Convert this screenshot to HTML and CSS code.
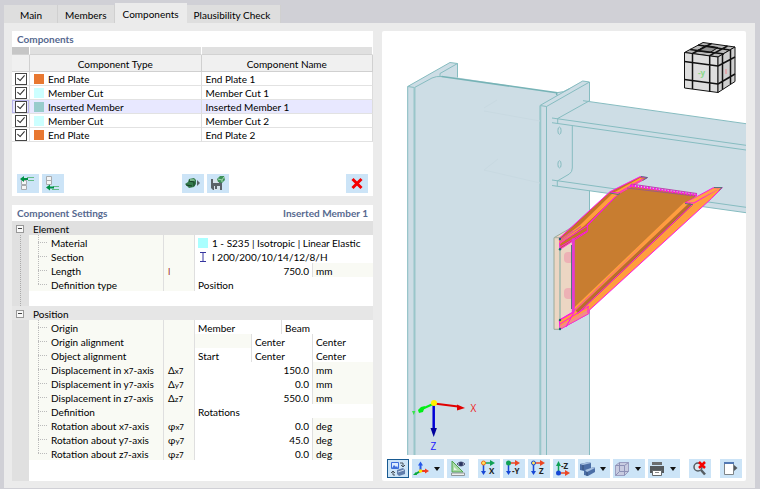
FILE: index.html
```html
<!DOCTYPE html>
<html lang="en">
<head>
<meta charset="utf-8">
<title>Steel Joint - Components</title>
<link rel="stylesheet" href="styles.css">
</head>
<body>
<div class="dialog">
  <nav class="tabs" role="tablist">
    <button class="tab" role="tab">Main</button>
    <button class="tab" role="tab">Members</button>
    <button class="tab active" role="tab" aria-selected="true">Components</button>
    <button class="tab" role="tab">Plausibility Check</button>
  </nav>
  <main class="content">
    <div class="left">
      <section class="panel list-panel">
        <header class="panel-title"><h2>Components</h2></header>
        <table class="components">
          <colgroup><col class="c-check"><col><col></colgroup>
          <thead>
            <tr class="strip"><td class="corner"></td><td></td><td></td></tr>
            <tr class="head"><th></th><th>Component Type</th><th>Component Name</th></tr>
          </thead>
          <tbody>
            <tr><td><input type="checkbox" checked aria-label="End Plate 1"></td><td><div class="type"><i class="swatch orange"></i>End Plate</div></td><td>End Plate 1</td></tr>
            <tr><td><input type="checkbox" checked aria-label="Member Cut 1"></td><td><div class="type"><i class="swatch cyan"></i>Member Cut</div></td><td>Member Cut 1</td></tr>
            <tr class="selected"><td><input type="checkbox" checked aria-label="Inserted Member 1"></td><td><div class="type"><i class="swatch teal"></i>Inserted Member</div></td><td>Inserted Member 1</td></tr>
            <tr><td><input type="checkbox" checked aria-label="Member Cut 2"></td><td><div class="type"><i class="swatch cyan"></i>Member Cut</div></td><td>Member Cut 2</td></tr>
            <tr><td><input type="checkbox" checked aria-label="End Plate 2"></td><td><div class="type"><i class="swatch orange"></i>End Plate</div></td><td>End Plate 2</td></tr>
          </tbody>
        </table>
        <div class="list-actions">
          <div class="group">
            <button class="tool" aria-label="Insert above"><svg width="22" height="19" viewBox="0 0 22 19"><path d="M4.500 6.500h5v4h-5zM4.500 11.500h5v4h-5z" fill="#f6f6f6" stroke="#a8abae"/><path d="M10 3.500h7M11 6.500h6" stroke="#64bd88"/><path d="M3 5l4-3v2h4v2H7v2z" fill="#009246"/></svg></button>
            <button class="tool" aria-label="Insert below"><svg width="22" height="19" viewBox="0 0 22 19"><path d="M4.500 2.500h5v4h-5zM4.500 6.500h5v4h-5z" fill="#f6f6f6" stroke="#a8abae"/><path d="M11 12.500h6M10 15.500h7" stroke="#64bd88"/><path d="M4 13.500l4-3v2h4v2H8v2z" fill="#009246"/></svg></button>
          </div>
          <div class="group">
            <button class="tool" aria-label="Import component"><svg width="22" height="19" viewBox="0 0 22 19"><path d="M3 10l3-2 1-3 5-1 2 2v4l-2 3-5 1z" fill="#347a4c"/><path d="M4 11l6 1M7 7l5 1v4" stroke="#173e25" fill="none"/><path d="M8 5l4 0 1 2-5 0z" fill="#79b58a"/><path d="M15 6l3 3-3 3z" fill="#59646b"/></svg></button>
            <button class="tool" aria-label="Save component"><svg width="22" height="19" viewBox="0 0 22 19"><path d="M4 5h10l1 1v10H6l-2-2z" fill="#596168"/><path d="M6 5h6v4H6zM7 12h6v4H7z" fill="#d5e2ec"/><path d="M8 12h2v3H8z" fill="#596168"/><path d="M10 5l3-3 4 0 1 4-3 3-4-1z" fill="#3d9259"/><path d="M11 5l4 1 2-3M15 6v2" stroke="#a8d7b5" fill="none"/></svg></button>
          </div>
          <button class="tool" aria-label="Delete component"><svg width="22" height="19" viewBox="0 0 22 19"><path d="M6.500 5l9 9M15.500 5l-9 9" stroke="#f50000" stroke-width="3"/></svg></button>
        </div>
      </section>
      <section class="panel settings-panel">
        <header class="panel-title"><h2>Component Settings</h2><strong>Inserted Member 1</strong></header>
        <table class="props">
          <colgroup><col class="p-gutter"><col class="p-name"><col class="p-symbol"><col class="p-a"><col class="p-b"><col class="p-c"><col></colgroup>
          <tbody>
            <tr class="category"><td><button class="fold" aria-label="Collapse Element"></button></td><th colspan="6">Element</th></tr>
            <tr><td></td><td>Material</td><td></td><td colspan="4"><div class="value"><i class="swatch aqua"></i>1 - S235 | Isotropic | Linear Elastic</div></td></tr>
            <tr><td></td><td>Section</td><td></td><td colspan="4"><div class="value"><svg class="section-icon" width="10" height="10" viewBox="0 0 10 10"><path d="M2 .5h6M5 .5v9M2 9.500h6" stroke="#3636a0" fill="none"/></svg>I 200/200/10/14/12/8/H</div></td></tr>
            <tr><td></td><td>Length</td><td class="red">l</td><td class="num" colspan="3">750.0</td><td class="unit">mm</td></tr>
            <tr class="last"><td></td><td>Definition type</td><td></td><td colspan="4">Position</td></tr>
            <tr class="spacer"><td></td><td colspan="6"></td></tr>
          </tbody>
          <tbody class="position">
            <tr class="category light"><td><button class="fold" aria-label="Collapse Position"></button></td><th colspan="6">Position</th></tr>
            <tr><td></td><td>Origin</td><td></td><td class="split" colspan="2">Member</td><td colspan="2">Beam</td></tr>
            <tr><td></td><td>Origin alignment</td><td></td><td class="split off"></td><td class="split" colspan="2">Center</td><td>Center</td></tr>
            <tr><td></td><td>Object alignment</td><td></td><td class="split">Start</td><td class="split" colspan="2">Center</td><td>Center</td></tr>
            <tr><td></td><td>Displacement in x<small>7</small>-axis</td><td>Δ<small>x7</small></td><td class="num" colspan="3">150.0</td><td class="unit">mm</td></tr>
            <tr><td></td><td>Displacement in y<small>7</small>-axis</td><td>Δ<small>y7</small></td><td class="num" colspan="3">0.0</td><td class="unit">mm</td></tr>
            <tr><td></td><td>Displacement in z<small>7</small>-axis</td><td>Δ<small>z7</small></td><td class="num" colspan="3">550.0</td><td class="unit">mm</td></tr>
            <tr><td></td><td>Definition</td><td></td><td colspan="4">Rotations</td></tr>
            <tr><td></td><td>Rotation about x<small>7</small>-axis</td><td>φ<small>x7</small></td><td class="num" colspan="3">0.0</td><td class="unit">deg</td></tr>
            <tr><td></td><td>Rotation about y<small>7</small>-axis</td><td>φ<small>y7</small></td><td class="num" colspan="3">45.0</td><td class="unit">deg</td></tr>
            <tr class="last"><td></td><td>Rotation about z<small>7</small>-axis</td><td>φ<small>z7</small></td><td class="num" colspan="3">0.0</td><td class="unit">deg</td></tr>
          </tbody>
        </table>
        <div class="gutter-rest"></div>
      </section>
    </div>
    <section class="panel view-panel">
      <svg class="scene" viewBox="382 31 364 424" role="img" aria-label="Joint model">
        <!-- column -->
        <g fill="#cddde5">
          <path d="M407.500 86.500L450 62.500l7.500 1v14L556.700 92.700 563 91.500 582.700 81l6.800 1V455H407.500z"/>
          <path d="M583 100.700L746 123.700V212.700L552 185.500v-67z"/>
        </g>
        <g fill="none" stroke="#86bcc0">
          <path d="M407.700 455V86.500L450 62.500l7.500 1L440 73.500v3M457.500 63.500v14M407.700 86.500l6.800 1L432 78q4-2 10-1.500"/>
          <path d="M414.500 455V87" stroke="#99c6ca" stroke-width="2"/>
          <path d="M441.700 76.500l115 16.200v2.500" stroke="#76b3b6" stroke-width="1.500"/>
          <path d="M556.700 92.700q7 0 13-4M540 105.500L582.700 81l6.800 1v19M540 105.500l6.500 1L589 82.300M589.500 190.500V455"/>
          <path d="M540.300 455V105.500" stroke="#99c6ca" stroke-width="2"/>
          <path d="M546.500 455V106.500"/>
        </g>
        <!-- beam -->
        <g fill="none" stroke="#86bcc0">
          <path d="M583 100.700L746 123.700M552 118l194 27.300M552 122.700l194 27.300M557.700 118.500v5M557.700 118.500L589 101M572.300 126v42q0 4-3 6l-12 7v5M552 180l194 27.300M552 185.500l194 27.200"/>
          <ellipse cx="559.500" cy="130.700" rx="1.600" ry="3.600"/><ellipse cx="559.500" cy="164.300" rx="1.600" ry="3.600"/>
        </g>
        <g fill="none" stroke="#c8d9e1"><path d="M484 111l56 10M484 108l13-8M484 170l56 13M484 170l14-11"/></g>
        <!-- end plate -->
        <path d="M554 237.700l19-11 16 0v86.600L560 329.300h-6z" fill="#ecd6c3" stroke="#9aaa99"/>
        <path d="M560 329V238" stroke="#78aaa0"/><path d="M554 237.700h6l14-9" stroke="#a2b2a1" fill="none"/>
        <g fill="#edb1b5"><rect x="564" y="252" width="10" height="11" rx="4"/><rect x="564" y="288" width="10" height="11" rx="4"/></g>
        <!-- inserted member -->
        <path d="M573.300 238L587 225l31-33 12-6 67 9-8 9L573.300 311.700z" fill="#c87d30"/>
        <path d="M559.300 238.300L610 191.700l30-15 7.300 1-29 16.300-31 31v6.700L560 249.300z" fill="#c57428" stroke="#ff14e8"/>
        <path d="M560 244l24-18 34-32 27-15-5-1-27 15-33 32-21 16z" fill="#ff9e3e"/>
        <path d="M560 243l27-17 28-29M560 247l27-16M610 192l8 1 25-14" fill="none" stroke="#ff14e8"/>
        <path d="M560 239.500l13-9M560 241.500l21-15" stroke="#d743ac"/>
        <path d="M627 188l68 8" stroke="#a05a81"/>
        <path d="M630 185.500l67 9.500" stroke="#ff14e8" stroke-width="2.500" stroke-dasharray="2 1"/>
        <path d="M631 184l66 9.500" stroke="#bb45ad"/>
        <path d="M559.300 320l14-8.300L685 203l28.300-15.300h9l-10.600 10.600L589 310.500v3L560 329.300z" fill="#ff9e3e" stroke="#ff14e8"/>
        <path d="M560 326l29-17v4l-29 16z" fill="#f48a8a"/>
        <path d="M577 312L691 204" stroke="#b96d2d" stroke-width="4"/>
        <path d="M573 310L685 203" stroke="#ff9e3e" stroke-width="2"/>
        <path d="M560 324l29-18M560 320l14-8-8 15M577 314L692 205M685 203h9l24-14M588 306v7" stroke="#ff14e8" fill="none"/>
        <path d="M687 202l26-13 6 0-26 13z" fill="#ffa04a"/>
        <path d="M573.300 238.500V312" stroke="#e43cd0" stroke-width="3"/>
        <path d="M571.500 245V309M641 176.500l6.500 1-5 3M610 193l8 1.500 2-1M714 187.500h8l-3 3M685 203.500l8 1.200" fill="none" stroke="#55777b"/>
        <g fill="#176d6e"><circle cx="560" cy="239" r="1.200"/><circle cx="560" cy="249.300" r="1.200"/><circle cx="560" cy="320" r="1.200"/><circle cx="560" cy="329" r="1.200"/></g>
        <!-- axes -->
        <g stroke-width="2" fill="none"><path d="M434 403.500l-13 6" stroke="#00ef16"/><path d="M434 403.500l24 3" stroke="#e10000"/><path d="M433.700 404v25" stroke="#0000d6" stroke-width="2.500"/></g>
        <path d="M418 410l3-3 4-1-2 6-4 1z" fill="#00ef16"/><path d="M465 408l-8-3.500v6z" fill="#e10000"/><path d="M433.700 437l-3.200-9h6.400z" fill="#00009c"/>
        <circle cx="434" cy="403" r="3" fill="#fff100"/>
        <path d="M412 411l1.700 4 1.700-4z" fill="#37e54a"/>
        <text x="470.500" y="412" class="axis" fill="#ee2222">X</text>
        <text x="430.500" y="450" class="axis" fill="#2020ff">Z</text>
        <!-- view cube -->
        <g stroke="#111" stroke-linejoin="round">
          <path d="M684.500 52.500L703 42.500l32 4.500-17 10z" fill="#b9b9b9"/>
          <path d="M684.500 52.500L718 57v35.500L684.500 88z" fill="#dedede"/>
          <path d="M718 57l17-10v34.500L718 92.500z" fill="#cfcfcf"/>
          <path d="M697 51l9-5.500 12 2-8 5z" fill="#929292"/>
          <path d="M692.500 53.500V89M709.700 55.700v36M684.500 61.500L718 66M684.500 79.500L718 84M722.500 54.500v35M730.500 50v34M718 66l17-9M718 84l17-10M692.500 53.500l19-10M709.700 55.700L727.500 46M690 49.500l34 4.500M698 45l31.500 5" fill="none" stroke-width="1.500"/>
        </g>
        <text x="698" y="76" class="cube-label">-y</text><path d="M726 69v5" stroke="#e0aaae" stroke-width="2"/>
      </svg>
      <div class="toolbar">
        <div class="group">
          <button class="tool pressed" aria-label="Render mode"><svg width="20" height="18" viewBox="0 0 20 18"><path d="M3.500 2.500h7v6h-7z" fill="#dcecff" stroke="#3d6edb"/><path d="M4 8l2-3 2 2 1-1 1 2z" fill="#3d6edb"/><path d="M12 3h3v4M13 5l2 2 2-2M7 15H5v-4M3 13l2-2 2 2" fill="none" stroke="#48535c"/><path d="M9 10l6-2 2 2v4l-6 2-2-2z" fill="#617eac"/><path d="M10 12l6-2" stroke="#cad9ed"/></svg></button>
          <button class="tool wide" aria-label="Coordinate axes"><svg width="22" height="18" viewBox="0 0 22 18"><path d="M8.500 11V5" stroke="#2458e8" stroke-width="2"/><path d="M8.500 11l-5 3" stroke="#0aa83e" stroke-width="2"/><path d="M8.500 11h6" stroke="#f03b22" stroke-width="2"/><path d="M6 5.500l2.500-4 2.500 4z" fill="#2458e8"/><path d="M1 15l3-3 1 3z" fill="#0aa83e"/><path d="M13 8.500l4 2.500-4 2.500z" fill="#f03b22"/><circle cx="8.500" cy="11" r="1.800" fill="#ffe600"/></svg><i class="caret"></i></button>
          <button class="tool" aria-label="Measure"><svg width="22" height="19" viewBox="0 0 22 19"><path d="M5 2v11h11z" fill="#acdba9" stroke="#4fa64d"/><path d="M7 8v3h3z" fill="#e9f5e9"/><path d="M4.500 14h13v2.500h-13z" fill="#eee" stroke="#8f9699"/><path d="M10 5q4-4 8 0-4 4-8 0z" fill="#c6ccda" stroke="#4e577a"/><circle cx="14" cy="5" r="2" fill="#293560"/></svg></button>
        </div>
        <div class="group">
          <button class="tool" aria-label="View in X"><svg width="22" height="19" viewBox="0 0 22 19"><path d="M6 4h7" stroke="#10a155" stroke-width="1.500"/><path d="M12 1l5 3-5 3z" fill="#10a155"/><path d="M5.500 4v9" stroke="#1647d5" stroke-width="1.500"/><path d="M3 12h5l-2.500 4z" fill="#1647d5"/><circle cx="5.500" cy="4" r="2" fill="#ffe25b" stroke="#f06b16"/><text x="11" y="15" class="glyph">X</text></svg></button>
          <button class="tool" aria-label="View in minus Y"><svg width="22" height="19" viewBox="0 0 22 19"><path d="M6 4h7" stroke="#ec4624" stroke-width="1.500"/><path d="M12 1l5 3-5 3z" fill="#ec4624"/><path d="M5.500 4v9" stroke="#1647d5" stroke-width="1.500"/><path d="M3 12h5l-2.500 4z" fill="#1647d5"/><circle cx="5.500" cy="4" r="2.500" fill="#10a155"/><text x="9" y="15" class="glyph">-Y</text></svg></button>
          <button class="tool" aria-label="View in Z"><svg width="22" height="19" viewBox="0 0 22 19"><path d="M6 4h7" stroke="#ec4624" stroke-width="1.500"/><path d="M12 1l5 3-5 3z" fill="#ec4624"/><path d="M5.500 4v9" stroke="#1647d5" stroke-width="1.500"/><path d="M3 12h5l-2.500 4z" fill="#1647d5"/><circle cx="5.500" cy="4" r="2" fill="#ffe25b" stroke="#1647d5"/><text x="11" y="15" class="glyph">Z</text></svg></button>
          <button class="tool" aria-label="View in minus Z"><svg width="22" height="19" viewBox="0 0 22 19"><path d="M6 14h7" stroke="#ec4624" stroke-width="1.500"/><path d="M12 11l5 3-5 3z" fill="#ec4624"/><path d="M5.500 14V6" stroke="#10a155" stroke-width="1.500"/><path d="M3 7h5L5.500 2z" fill="#10a155"/><circle cx="5.500" cy="14" r="2.500" fill="#1647d5"/><text x="8" y="10" class="glyph">-Z</text></svg></button>
          <button class="tool wide" aria-label="Display solid"><svg width="22" height="18" viewBox="0 0 22 18"><path d="M2 4l9-2 2 1v5l3-1 1 1v4l-7 4-4-1v-4l-4-1z" fill="#4b6ea6"/><path d="M2 4l9-2 2 1-8 2zM7 10l9-3 1 1-8 4z" fill="#a8c2e2"/><path d="M5 5v5M9 12v4" stroke="#344f7b" fill="none"/></svg><i class="caret"></i></button>
          <button class="tool wide" aria-label="Display wireframe"><svg width="22" height="18" viewBox="0 0 22 18"><path d="M2.500 5.500l4-3h9v9l-4 4h-9z" fill="#c8cbe0" stroke="#9a9dc0"/><path d="M2.500 5.500h9v10M11.500 5.500l4-3M6.500 2.500v9h9M6.500 11.500l-4 4" fill="none" stroke="#8d91b6"/></svg><i class="caret"></i></button>
          <button class="tool wide" aria-label="Print"><svg width="22" height="18" viewBox="0 0 22 18"><path d="M4 2h10v3H4z" fill="#6b6e70"/><path d="M2 6h14v7H2z" fill="#54595d"/><path d="M4.500 10.500h9v5h-9z" fill="#fff" stroke="#63686b"/><path d="M7 12.500h4" stroke="#888"/></svg><i class="caret"></i></button>
        </div>
        <button class="tool" aria-label="Reset zoom"><svg width="22" height="19" viewBox="0 0 22 19"><circle cx="9" cy="8" r="4" fill="#dce8ef" stroke="#555d63" stroke-width="1.500"/><path d="M12 11l4 4.500" stroke="#555d63" stroke-width="2.500"/><path d="M10 3l6 6M16 3l-6 6" stroke="#f50000" stroke-width="2.500"/></svg></button>
        <button class="tool" aria-label="Detach view"><svg width="22" height="19" viewBox="0 0 22 19"><path d="M4.500 3.500h9v12h-9z" fill="#fff" stroke="#7e8488"/><path d="M4 3h10v2H4z" fill="#5379b4"/><path d="M14 6l3.500 3-3.500 3z" fill="#52585c"/></svg></button>
      </div>
    </section>
  </main>
</div>
</body>
</html>
```
FILE: styles.css
```css
* { box-sizing: border-box; }

body {
  margin: 0;
  background: #d0d0d6;
  color: #000;
  font: 10px/14px Lato, "Open Sans", sans-serif;
}

button { font: inherit; color: inherit; }

.dialog {
  display: flex;
  flex-direction: column;
  min-height: 100vh;
  padding: 3px 5px 1px 4px;
}

.tabs {
  display: flex;
  align-items: flex-end;
  height: 20px;
}

.tab {
  height: 18px;
  padding: 2px 7px 0;
  border: 0;
  border-right: 1px solid #d0d0d0;
  background: #dedede;
  line-height: 16px;
}

.tab:first-child { padding: 2px 15px 0 16px; }
.tab:last-child { padding-right: 10px; }

.tab.active {
  height: 20px;
  padding: 2px 8px 0;
  border: 0;
  background: #ebebeb;
  line-height: 18px;
}

.content {
  flex: 1;
  display: grid;
  grid-template-columns: minmax(0, 361fr) minmax(0, 364fr);
  gap: 9px;
  padding: 8px 9px 7px 8px;
  background: #ebebeb;
}

.left {
  display: flex;
  flex-direction: column;
  gap: 9px;
  min-width: 0;
}

.panel {
  display: flex;
  flex-direction: column;
  background: #fff;
}

.settings-panel { flex: 1; }

.panel-title {
  display: flex;
  justify-content: space-between;
  padding: 0 5px;
  color: #56698f;
  font-weight: 700;
  line-height: 16px;
}

.panel-title h2 { margin: 0; font: inherit; }
.panel-title strong { font: inherit; }

table {
  width: 100%;
  border-collapse: separate;
  border-spacing: 0;
  table-layout: fixed;
}

td, th {
  height: 14px;
  padding: 2px 0 0;
  line-height: 12px;
  font-weight: 400;
  text-align: left;
  white-space: nowrap;
}

.c-check { width: 18px; }

.components td {
  padding: 1px 0 0 4px;
  border-right: 1px solid #dcdcdc;
  border-bottom: 1px solid #e2e2e2;
}

.components td:first-child { padding: 0 0 0 3px; }

.components .strip td {
  height: 8px;
  border-right-color: #fff;
  border-bottom-color: #d2d2d2;
  background: #e0e0e0;
}

.components .strip .corner { background: #c6c6c6; }

.components th {
  height: 17px;
  border-right: 1px solid #d0d0d0;
  border-bottom: 1px solid #d0d0d0;
  background: #f0f0f0;
  text-align: center;
}

.components .selected td { background: #e8e8ff; }
.components .selected td:first-child { box-shadow: inset 0 0 0 1px #b9b5ee; }

.components input {
  display: block;
  width: 12px;
  height: 12px;
  margin: 0;
  padding: 1px;
  border: 1px solid #444;
  background: #fff;
  appearance: none;
}

.components input:checked::before {
  content: "";
  display: block;
  height: 8px;
  background: #333;
  clip-path: polygon(0 50%, 10% 40%, 38% 65%, 90% 5%, 100% 15%, 40% 85%);
}

.type, .value { display: flex; align-items: center; }

.swatch { width: 10px; height: 10px; margin-right: 4px; }
.orange { background: #e87831; }
.cyan { background: #ccffff; }
.teal { background: #99cccc; }
.aqua { background: #aaffff; }

.list-actions {
  display: flex;
  justify-content: space-between;
  padding: 32px 5px 3px;
}

.group { display: flex; gap: 3px; }

.tool {
  display: flex;
  align-items: center;
  justify-content: center;
  width: 22px;
  height: 19px;
  padding: 0;
  border: 0;
  background: #cce4f7;
}

.tool svg { flex: none; }
.tool.wide { width: 32px; justify-content: flex-start; }
.tool.pressed { border: 1px solid #185a91; }

.caret {
  border: 3px solid transparent;
  border-top: 4px solid #111;
  border-bottom: 0;
}

.glyph { font: 700 8px "Open Sans", sans-serif; fill: #222; }

/* property grid */
.p-gutter { width: 17px; }
.p-name { width: 135px; }
.p-symbol { width: 31px; }
.p-a { width: 57px; }
.p-b { width: 30px; }
.p-c { width: 31px; }

.props td { padding-left: 3px; }
.props th { padding-left: 4px; }

.props td:first-child {
  padding: 1px 0 0;
  background: repeating-linear-gradient(#aaa 0 1px, #e0e0e0 1px 2px) 8px 0 / 1px 100% no-repeat #e0e0e0;
}

.props .position td:first-child, .gutter-rest { background: #e0e0e0; }

.props td:nth-child(2) {
  padding-left: 22px;
  border-right: 1px solid #dfdfdf;
  background:
    repeating-linear-gradient(#bbb 0 1px, transparent 1px 2px) 9px 0 / 1px 100% no-repeat,
    repeating-linear-gradient(90deg, #bbb 0 1px, transparent 1px 2px) 9px 7px / 10px 1px no-repeat,
    #f9faf4;
}

.props .last td:nth-child(2) { background-size: 1px 8px, 10px 1px, auto; }

.props td:nth-child(3) {
  padding-left: 4px;
  border-right: 1px solid #dfdfdf;
  background: #f9faf4;
}

.props .category td, .props .category th { background: #e0e0e0; }
.props .category.light td, .props .category.light th { background: #e6e6e6; }
.props .spacer td:nth-child(2) { height: 15px; border: 0; background: #fff; }

.props .split { border-right: 1px solid #dfdfdf; }
.props .off, .props .unit { background: #f9faf4; }
.props .num { padding-right: 3px; border-right: 1px solid #dfdfdf; text-align: right; }
.props .red { color: #a03030; }
.props small { font-size: 8px; line-height: 0; }

.section-icon { margin-right: 4px; }

.fold {
  display: block;
  width: 8px;
  height: 8px;
  margin-left: 4px;
  padding: 0;
  border: 1px solid #999;
  background: linear-gradient(#444, #444) center / 4px 1px no-repeat #f8f8f8;
}

.gutter-rest { flex: 1; width: 17px; }

/* model view */
.view-panel { border-radius: 2px; min-width: 0; }
.scene { display: block; width: 100%; flex: 1; min-height: 0; }
.axis { font: 10px "Open Sans", sans-serif; }
.cube-label { font: 700 8px "Open Sans", sans-serif; fill: #8bd98b; }

.toolbar {
  display: flex;
  gap: 9px;
  padding: 4px 4px 3px 5px;
}
```
